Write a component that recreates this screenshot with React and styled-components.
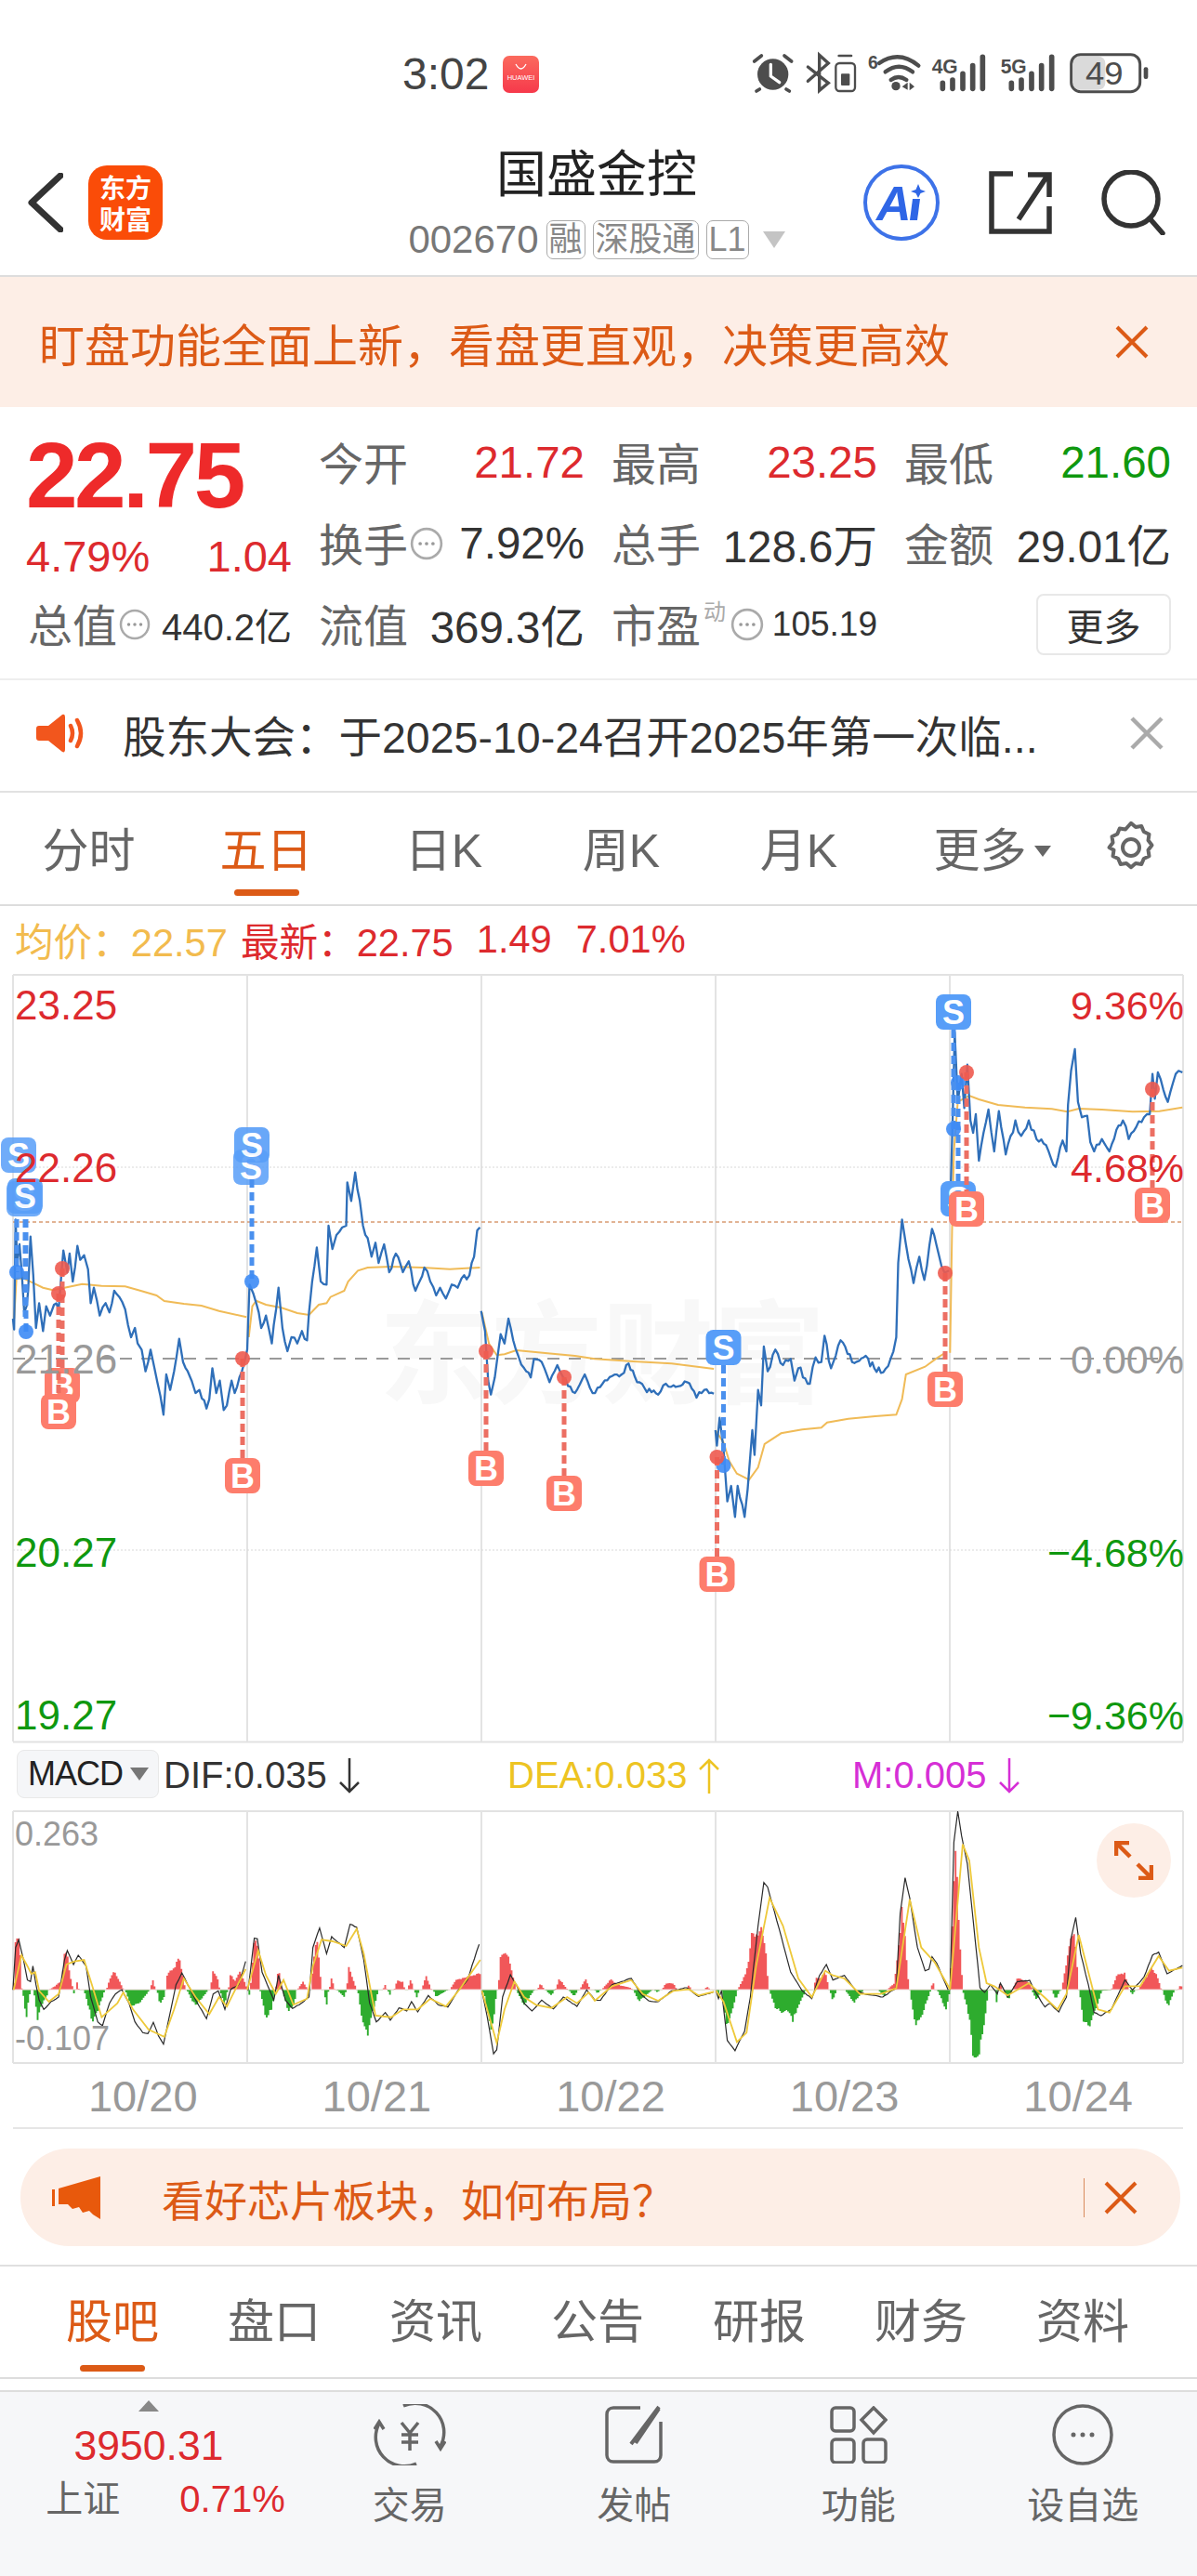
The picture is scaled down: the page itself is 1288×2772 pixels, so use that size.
import React from 'react';
import styled, {createGlobalStyle} from 'styled-components';

const SANS = '"Liberation Sans","Noto Sans CJK SC",sans-serif';
const RED = '#dd2a2e';
const GREEN = '#0f980f';
const ORANGE = '#dc5a16';
const PEACH = '#fdeee6';

const GlobalStyle = createGlobalStyle`
    html,body{margin:0;padding:0;background:#fff;}
    body{font-family:${SANS};}
    *{box-sizing:border-box;}
`;

// ---- chart data, traced from crops: "x,y x,y ..." in crop coordinates, converted to page px ----
const parse = (s, fx, fy) => s.trim().split(/\s+/).map(p => {
    const [x, y] = p.split(',').map(Number);
    return [fx(x), fy(y)];
});
const xa = x => x / 2.376;
const xb = x => 640 + x * 0.4133;
const yTop = y => 1040 + y / 3;
const yLow = y => 1480 + y / 3;
const yMacd = y => 1950 + y / 3;

let seed = 7;
const rnd = () => {
    seed = (seed * 16807) % 2147483647;
    return seed / 2147483647;
};

// subdivide each segment and add a little noise so it looks like tick data
const jag = (pts, amp) => {
    let out = [pts[0]];
    for (let i = 1; i < pts.length; i++) {
        const [x0, y0] = pts[i - 1];
        const [x1, y1] = pts[i];
        const n = Math.max(1, Math.floor((x1 - x0) / 2.2));
        for (let k = 1; k < n; k++) {
            const t = k / n;
            out.push([x0 + (x1 - x0) * t, y0 + (y1 - y0) * t + (rnd() - 0.5) * amp]);
        }
        out.push([x1, y1]);
    }
    return out;
};
const toPath = pts => 'M' + pts.map(p => p[0].toFixed(1) + ' ' + p[1].toFixed(1)).join('L');

const blue = [
    jag(parse('33,1140 36,1175 40,820 44,960 50,900 56,1000 62,1120 68,1100 72,1050 78,875 85,1000 92,1170 100,1090 110,1180 118,1100 128,1130 138,1095 150,1110 158,980 162,920 172,990 178,930 186,1020 198,905 205,950 215,935 225,980 232,1090 240,1040 255,1130 270,1090 280,1120 292,1050 305,1070 320,1110 335,1200 345,1170 352,1220 362,1240 372,1310 385,1240 395,1300 410,1390 418,1450 425,1320 435,1370 445,1310 458,1205 468,1280 480,1310 490,1340 500,1380 510,1370 528,1430 535,1400 543,1300 553,1380 562,1340 572,1435 580,1420 592,1340 600,1380 612,1330 625,1280 632,1240 638,1030 648,1060 655,1090 668,1170 680,1130 695,1220 700,1160 712,1040 722,1170 735,1245 745,1200 760,1220 772,1180 785,1210 790,1120 798,1020 810,910 820,1020 835,1030 840,840 850,915 860,870 875,845 885,840 888,700 898,760 908,668 920,760 928,840 940,880 950,940 960,895 968,960 982,900 995,990 1012,930 1030,990 1045,955 1062,1050 1085,975 1100,1020 1115,1065 1125,1040 1140,1075 1155,1030 1170,1040 1180,1010 1200,1000 1212,940 1220,855 1227,845', xa, yTop), 8),
    jag([
        ...parse('1230,1115 1240,1180 1248,1340 1255,1385 1265,1330 1280,1190 1290,1220 1300,1140 1312,1210 1325,1260 1340,1300 1357,1330 1365,1270 1385,1280 1405,1345 1425,1290 1440,1330 1470,1380 1495,1320 1515,1380', xa, yTop),
        ...parse('20,1350 45,1325 70,1320 88,1285 110,1345 130,1365 165,1385 185,1350 205,1355 240,1345 265,1395 285,1370 310,1382', xb, yTop),
    ], 6),
    jag([
        ...parse('314,180 318,230 325,140 335,240 345,410 355,360 365,460 372,360 390,460 398,370 405,260 410,180 416,260 425,50', xb, yLow),
        ...parse('433,1420 440,1230 450,1310 470,1240 490,1290 510,1270 520,1340 530,1300 560,1350 575,1265 590,1280 598,1195 615,1300 640,1210 670,1280 700,1265 745,1315 770,1270 785,1200 790,960 800,820 810,900 830,1025 845,940 858,1015 878,850 895,930 910,990 922,985', xb, yTop),
    ], 8),
    jag(parse('925,800 932,480 937,215 945,440 955,350 962,460 970,320 978,500 985,540 992,480 1000,630 1012,540 1025,465 1040,600 1052,470 1070,610 1095,500 1110,550 1130,500 1150,560 1175,580 1200,650 1218,565 1228,600 1232,450 1240,340 1250,270 1258,440 1268,490 1282,485 1290,570 1300,600 1320,560 1340,600 1358,530 1375,500 1390,560 1410,520 1430,490 1445,480 1452,350 1458,430 1466,345 1480,400 1492,440 1505,380 1520,340 1530,345', xb, yTop), 8),
];

const avg = [
    parse('36,1140 42,1010 60,1010 85,1025 110,1040 135,1048 165,1040 210,1028 260,1034 320,1036 360,1050 400,1065 420,1083 470,1092 515,1098 560,1115 630,1135', xa, yTop),
    parse('636,1200 645,1100 655,1082 680,1095 720,1105 760,1122 790,1128 815,1095 835,1090 845,1070 880,1050 890,1020 915,985 940,975 1000,972 1080,975 1150,980 1227,975', xa, yTop),
    [...parse('1232,1120 1250,1220 1270,1258 1290,1255 1320,1242 1400,1252 1470,1260', xa, yTop), ...parse('0,1270 100,1278 200,1285 310,1302', xb, yTop)],
    [...parse('314,180 335,220 350,280 370,320 402,340 425,300 442,225 485,190 540,178 590,172 605,155 660,143 730,135 785,130 800,80', xb, yLow), ...parse('810,1320 860,1295 890,1268 915,1248', xb, yTop)],
    parse('925,1250 930,860 935,600 945,440 975,420 1000,432 1050,450 1120,458 1190,463 1230,472 1260,462 1320,465 1400,472 1470,470 1530,458', xb, yTop),
];

const marks = [
    {t: 'S', x: 20, y: 1244, o: .85},
    {t: 'S', x: 26, y: 1291, o: .85},
    {t: 'S', x: 27, y: 1288, o: .9, line: [1313, 1418]},
    {t: 'S', x: 18, y: 1290, o: 0, dot: 1370, line: [1313, 1370]},
    {t: 'S', x: 28, y: 1290, o: 0, dot: 1434, line: [1313, 1434]},
    {t: 'B', x: 67, y: 1492, dot: 1366, line: [1366, 1476]},
    {t: 'B', x: 63, y: 1520, dot: 1393, line: [1393, 1500]},
    {t: 'S', x: 270, y: 1257, o: .85},
    {t: 'S', x: 271, y: 1233, dot: 1380, line: [1270, 1380], o: .9},
    {t: 'B', x: 261, y: 1589, dot: 1463, line: [1463, 1570]},
    {t: 'B', x: 523, y: 1581, dot: 1455, line: [1455, 1562]},
    {t: 'B', x: 607, y: 1608, dot: 1483, line: [1483, 1590]},
    {t: 'S', x: 778.5, y: 1451, dot: 1578, line: [1470, 1578]},
    {t: 'B', x: 771.5, y: 1695, dot: 1569, line: [1569, 1676]},
    {t: 'B', x: 1017, y: 1496, dot: 1371, line: [1371, 1477]},
    {t: 'S', x: 1031, y: 1291, dot: 1166, line: [1166, 1272]},
    {t: 'S', x: 1026, y: 1090, dot: 1216, line: [1109, 1216]},
    {t: 'B', x: 1040, y: 1302, dot: 1155, line: [1155, 1283]},
    {t: 'B', x: 1240, y: 1298, dot: 1173, line: [1173, 1279]},
];

const histPts = [
    ...parse('33,577 35,577 40,408 50,410 56,577 58,577 62,625 68,670 72,620 78,577 85,577 90,610 96,690 105,630 120,600 124,577 126,577 140,565 158,545 165,445 172,460 182,550 188,577 190,600 193,577 196,545 202,577 215,577 228,640 236,695 250,650 268,577 272,577 280,545 292,512 305,545 316,577 320,577 335,630 350,625 365,610 382,577 385,577 390,540 398,577 402,577 408,625 420,600 422,577 424,577 428,520 445,505 458,460 468,530 474,577 478,577 490,610 500,630 515,610 532,577 538,577 545,510 555,530 562,577 575,630 582,577 584,577 590,520 600,550 615,510 628,560 634,577 636,605 640,577 650,410 660,420 665,577 675,640 680,675 695,640 703,577 705,577 712,505 722,577 738,655 755,610 758,577 760,577 775,550 788,577 795,577 805,430 812,400 822,577 828,577 835,630 840,577 842,577 848,535 856,577 862,577 880,600 886,577 892,500 905,550 912,577 915,577 925,680 940,735 955,640 968,577 980,577 983,555 990,577 992,577 996,600 1000,577 1008,577 1015,545 1030,550 1035,577 1042,577 1050,540 1058,577 1060,577 1065,605 1072,577 1078,577 1090,530 1103,577 1108,577 1115,600 1145,577 1150,577 1165,545 1185,535 1228,520 1231,577 1232,577 1240,600 1255,715 1262,680 1270,577 1274,577 1280,450 1300,460 1310,520 1320,577 1340,630 1366,577 1374,577 1382,555 1392,577 1395,577 1410,597 1418,577 1420,577 1430,540 1452,577 1455,577 1468,600 1478,577 1482,577 1497,540 1510,577', xa, yMacd),
    ...parse('0,577 8,590 15,577 18,577 42,540 60,560 95,570 98,577 100,577 115,615 130,600 150,577 155,577 163,585 170,577 175,577 185,555 205,555 214,577 238,577 245,560 252,577 285,577 292,565 302,577 318,577 320,620 326,577 330,577 345,710 355,660 372,577 385,545 398,500 410,370 420,400 435,360 445,430 452,577 455,577 470,640 490,655 505,650 515,685 530,630 550,577 570,577 575,535 590,535 600,510 610,577 612,577 620,615 630,577 652,577 675,620 700,577 738,577 755,600 760,577 780,555 790,450 800,290 808,400 818,577 820,577 835,705 850,670 875,577 876,577 880,535 884,577 892,577 915,645 925,577 935,200 940,60 948,340 958,577 975,670 985,805 998,805 1012,720 1025,577 1042,577 1046,625 1050,577 1056,550 1062,577 1065,577 1078,610 1085,577 1088,577 1100,535 1135,555 1138,577 1150,610 1165,577 1190,577 1200,610 1212,577 1215,577 1222,530 1240,400 1250,390 1260,577 1262,577 1272,695 1290,700 1320,580 1345,577 1360,525 1380,520 1392,577 1400,592 1408,577 1415,577 1430,545 1450,500 1465,530 1475,577 1478,577 1492,635 1510,577 1518,577 1525,560 1535,577', xb, yMacd),
];

const difLines = [
    parse('33,577 40,440 48,415 60,480 70,545 78,550 84,500 92,560 100,610 112,640 130,615 150,600 165,480 172,450 188,495 200,465 220,500 232,600 250,680 262,692 280,620 295,590 312,577 330,620 345,680 365,715 378,718 392,682 405,725 418,752 430,680 450,560 465,522 480,560 505,620 528,670 545,590 558,580 575,640 590,575 610,560 628,485', xa, yMacd),
    parse('634,580 650,410 658,412 670,520 690,580 700,610 712,530 730,610 748,637 770,620 790,600 800,440 817,377 835,460 848,405 880,440 895,365 912,375 930,480 945,620 962,680 985,650 998,675 1020,635 1040,645 1052,615 1068,648 1095,595 1120,625 1145,632 1170,580 1195,545 1225,430', xa, yMacd),
    [...parse('1232,580 1245,660 1262,783 1270,770 1285,600 1305,528 1320,560 1340,620 1360,645 1385,610 1415,638 1440,600 1475,630 1500,577', xa, yMacd), ...parse('0,610 15,610 45,560 70,550 95,540 120,590 140,612 165,615 200,580 240,570 270,598 310,583', xb, yMacd)],
    parse('316,580 322,605 330,580 345,740 365,773 390,710 405,600 425,370 440,230 450,245 480,380 510,520 540,580 565,605 585,530 603,495 620,545 650,530 680,580 710,592 750,600 785,570 795,330 808,215 820,280 840,440 860,515 870,510 878,470 890,490 920,577', xb, yMacd),
    parse('925,577 935,100 945,0 955,80 970,170 985,350 1003,570 1015,585 1030,560 1048,590 1056,555 1075,600 1100,550 1132,546 1150,590 1172,632 1185,620 1208,648 1228,600 1240,410 1252,343 1265,460 1285,560 1300,650 1318,660 1345,640 1380,545 1400,577 1430,535 1452,465 1468,455 1490,525 1530,498', xb, yMacd),
];

const deaLines = [
    parse('35,577 55,465 70,500 80,525 90,520 100,580 125,615 150,590 170,495 190,485 215,480 235,560 260,665 300,620 315,585 340,640 380,705 420,728 445,640 470,540 500,600 535,655 560,600 580,630 600,580 628,510', xa, yMacd),
    parse('632,577 660,450 680,530 705,590 725,545 750,625 785,605 800,500 822,415 850,420 885,435 912,380 930,460 960,660 1000,665 1030,640 1068,640 1100,605 1140,630 1175,575 1228,480', xa, yMacd),
    [...parse('1232,580 1270,748 1290,640 1315,550 1340,600 1370,625 1410,635 1450,600 1475,620 1505,585', xa, yMacd), ...parse('0,612 45,565 95,545 125,590 165,612 205,580 245,575 270,595 310,583', xb, yMacd)],
    parse('316,580 335,615 370,745 395,715 420,500 455,280 490,370 530,540 565,600 600,515 620,530 650,540 690,590 745,590 785,572 820,285 850,440 885,488 925,575', xb, yMacd),
    parse('925,575 958,107 975,160 1000,440 1020,555 1040,565 1075,595 1130,555 1170,600 1205,640 1228,590 1260,400 1285,520 1310,640 1340,650 1380,565 1420,565 1468,468 1495,515 1530,505', xb, yMacd),
];

const BASE = 2142;
const histogram = () => {
    let up = '';
    let down = '';
    let seg = 0;
    for (let x = 15; x < 1273; x += 1.7) {
        while (seg < histPts.length - 2 && histPts[seg + 1][0] < x) seg++;
        const [x0, y0] = histPts[seg];
        const [x1, y1] = histPts[seg + 1];
        const t = x1 > x0 ? Math.min(1, Math.max(0, (x - x0) / (x1 - x0))) : 0;
        const y = BASE + (y0 + (y1 - y0) * t - BASE) * (0.86 + rnd() * 0.14);
        const d = `M${x.toFixed(1)} ${BASE}V${y.toFixed(1)}`;
        if (y < BASE) up += d; else down += d;
    }
    return {up, down};
};
const hist = histogram();
const gridX = [14, 266, 518, 770, 1022, 1273];

// ---- layout ----
const Page = styled.div`
    width:1288px;
    height:2772px;
    display:flex;
    flex-direction:column;
    background:#fff;
    overflow:hidden;
`;
const StatusBar = styled.div`
    height:130px;
    flex:none;
    display:flex;
    align-items:center;
    padding:30px 28px 0 433px;
`;
const Clock = styled.span`
    font-size:48px;
    line-height:50px;
    color:#444;
    margin-right:15px;
`;
const StatusIcons = styled.svg`
    margin-left:auto;
    display:block;
`;
const Header = styled.div`
    height:168px;
    flex:none;
    display:grid;
    grid-template-columns:1fr auto 1fr;
    align-items:center;
    border-bottom:2px solid #ddd;
    padding:10px 34px 0 30px;
`;
const HeaderLeft = styled.div`
    display:flex;
    align-items:center;
    gap:27px;
`;
const Logo = styled.div`
    width:80px;
    height:80px;
    border-radius:20px;
    background:#fa4c08;
    color:#fff;
    font-size:28px;
    line-height:34px;
    font-weight:700;
    display:flex;
    align-items:center;
    justify-content:center;
    text-align:center;
    font-family:"Noto Sans CJK SC",sans-serif;
`;
const TitleBlock = styled.div`
    display:flex;
    flex-direction:column;
    align-items:center;
    margin-top:-2px;
`;
const Title = styled.div`
    font-size:54px;
    line-height:66px;
    color:#222;
`;
const SubRow = styled.div`
    display:flex;
    align-items:center;
    gap:8px;
    margin-top:15px;
`;
const Code = styled.span`
    font-size:42px;
    line-height:44px;
    color:#777;
`;
const Tag = styled.span`
    font-size:36px;
    line-height:40px;
    height:42px;
    padding:0 2px;
    border:1px solid #aaa;
    border-radius:7px;
    color:#888;
`;
const Caret = styled.span`
    width:0;
    height:0;
    margin-left:${p => p.$gap ?? 7}px;
    border-left:${p => p.$half || 12}px solid transparent;
    border-right:${p => p.$half || 12}px solid transparent;
    border-top:${p => p.$size || 18}px solid ${p => p.$color || '#c4c4c4'};
`;
const HeaderRight = styled.div`
    display:flex;
    align-items:center;
    justify-content:flex-end;
    gap:52px;
`;
const Banner = styled.div`
    height:140px;
    flex:none;
    background:${PEACH};
    display:flex;
    align-items:center;
    justify-content:space-between;
    padding:0 52px 0 42px;
    color:${ORANGE};
    font-size:49px;
`;
const Quote = styled.div`
    height:292px;
    flex:none;
    display:grid;
    grid-template-columns:284px 286px 286px 287px;
    grid-template-rows:87px 87px 87px;
    column-gap:29px;
    padding:16px 0 0 30px;
`;
const PriceCell = styled.div`
    grid-row:1 / span 2;
    padding-top:7px;
`;
const Price = styled.div`
    font-size:100px;
    line-height:100px;
    font-weight:700;
    letter-spacing:-3.500px;
    margin-left:-2px;
    color:#ee2a2a;
`;
const ChangeRow = styled.div`
    display:flex;
    justify-content:space-between;
    align-items:center;
    height:74px;
    font-size:47px;
    color:${RED};
    margin-left:-2px;
`;
const Stat = styled.div`
    display:flex;
    align-items:center;
`;
const Label = styled.span`
    font-size:48px;
    color:#666;
    margin-top:-4px;
`;
const Value = styled.span`
    margin-left:auto;
    font-size:${p => p.$size || 47.5}px;
    color:${p => p.$color || '#333'};
`;
const Super = styled.span`
    font-size:24px;
    color:#aaa;
    align-self:flex-start;
    margin:11px 3px 0 3px;
`;
const InfoWrap = styled.svg`
    flex:none;
    margin-left:2px;
`;
const MoreButton = styled.div`
    justify-self:end;
    align-self:center;
    width:145px;
    height:66px;
    border:2px solid #e8e8e8;
    border-radius:8px;
    font-size:40px;
    color:#333;
    display:flex;
    align-items:center;
    justify-content:center;
`;
const Notice = styled.div`
    height:123px;
    flex:none;
    display:flex;
    align-items:center;
    border-top:2px solid #eee;
    border-bottom:2px solid #e2e2e2;
    padding:0 36px 5px 39px;
    font-size:46.5px;
    color:#333;
`;
const NoticeText = styled.span`
    margin-left:39px;
    flex:1;
    white-space:nowrap;
`;
const KTabs = styled.div`
    height:122px;
    flex:none;
    display:grid;
    grid-template-columns:repeat(6,191px) 1fr;
    border-bottom:2px solid #ddd;
`;
const Tab = styled.div`
    display:flex;
    flex-direction:column;
    align-items:center;
    padding:${p => p.$top || 30}px 0 0 ${p => p.$left || 0}px;
`;
const TabLabel = styled.span`
    font-size:50px;
    line-height:60px;
    white-space:nowrap;
    color:${p => p.$active ? ORANGE : p.$color || '#666'};
    display:flex;
    align-items:center;
`;
const TabBar = styled.span`
    width:70px;
    height:7px;
    border-radius:4px;
    margin-top:${p => p.$gap}px;
    background:${p => p.$active ? ORANGE : 'transparent'};
`;
const GearCell = styled.div`
    display:flex;
    align-items:center;
    justify-content:center;
    padding-bottom:2px;
`;
const Legend = styled.div`
    height:73px;
    flex:none;
    display:flex;
    align-items:center;
    padding-left:16px;
    font-size:41.6px;
    padding-bottom:2px;
    white-space:nowrap;
`;
const LegendItem = styled.span`
    color:${p => p.$color};
    margin-left:${p => p.$gap || 0}px;
`;
const ChartBox = styled.div`
    position:relative;
    width:1288px;
    height:${p => p.$h}px;
    flex:none;
`;
const ChartSvg = styled.svg`
    position:relative;
    display:block;
`;
const Watermark = styled.div`
    position:absolute;
    left:408px;
    top:346px;
    font-size:120px;
    line-height:130px;
    font-weight:700;
    color:#f8f8f8;
    white-space:nowrap;
`;
const AxisLabel = styled.span`
    position:absolute;
    top:${p => p.$top}px;
    ${p => p.$right ? 'right:14px;' : 'left:16px;'}
    font-size:${p => p.$size || 44}px;
    line-height:50px;
    color:${p => p.$color};
`;
const MacdHead = styled.div`
    height:72px;
    flex:none;
    display:flex;
    align-items:center;
    padding:0 0 3px 18px;
    font-size:40px;
`;
const MacdSelect = styled.div`
    width:153px;
    height:52px;
    flex:none;
    display:flex;
    align-items:center;
    padding-left:11px;
    margin-top:-3px;
    background:#f5f6f8;
    border:1px solid #e9e9e9;
    border-radius:8px;
    font-size:36px;
    letter-spacing:-1px;
    color:#222;
`;
const Indicator = styled.div`
    width:${p => p.$w}px;
    flex:none;
    display:flex;
    align-items:center;
    gap:12px;
    margin-left:${p => p.$gap || 0}px;
    color:${p => p.$color};
`;
const ExpandButton = styled.div`
    position:absolute;
    left:1180px;
    top:14px;
    width:80px;
    height:80px;
    border-radius:50%;
    background:${PEACH};
    display:flex;
    align-items:center;
    justify-content:center;
`;
const Dates = styled.div`
    height:70px;
    flex:none;
    display:grid;
    grid-template-columns:repeat(5,251.6px);
    align-items:center;
    margin:0 15px 0 14px;
    padding-left:14px;
    border-bottom:2px solid #e6e6e6;
    font-size:47px;
    color:#999;
    text-align:center;
`;
const AdWrap = styled.div`
    height:148px;
    flex:none;
    padding:21px 18px 0 22px;
    border-bottom:2px solid #e0e0e0;
`;
const AdBar = styled.div`
    height:105px;
    border-radius:52px;
    background:${PEACH};
    display:flex;
    align-items:center;
    padding:0 46px 0 34px;
    color:${ORANGE};
    font-size:46px;
`;
const AdText = styled.span`
    margin-left:64px;
    flex:1;
`;
const AdDivider = styled.span`
    width:1px;
    height:42px;
    background:#d98a5c;
    margin-right:21px;
`;
const InfoTabs = styled.div`
    height:121px;
    flex:none;
    display:grid;
    grid-template-columns:repeat(7,174px);
    padding-left:34px;
    border-bottom:2px solid #ddd;
`;
const BottomBar = styled.div`
    margin-top:12px;
    flex:1;
    display:grid;
    grid-template-columns:320px repeat(4,241.5px);
    background:#f6f7f9;
    border-top:2px solid #ddd;
`;
const Ticker = styled.div`
    display:flex;
    flex-direction:column;
    align-items:center;
    padding-top:9px;
`;
const TickerUp = styled.span`
    width:0;
    height:0;
    border-left:11px solid transparent;
    border-right:11px solid transparent;
    border-bottom:12px solid #888;
`;
const TickerValue = styled.span`
    font-size:44.5px;
    line-height:50px;
    margin-top:12px;
    color:${RED};
`;
const TickerRow = styled.div`
    display:flex;
    align-items:center;
    gap:64px;
    margin:12px 0 0 36px;
    font-size:40px;
    line-height:40px;
    color:#666;
`;
const TickerChange = styled.span`
    color:${RED};
`;
const NavItem = styled.div`
    display:flex;
    flex-direction:column;
    align-items:center;
    padding-top:12px;
`;
const NavIconBox = styled.div`
    height:68px;
    display:flex;
    align-items:center;
    justify-content:center;
`;
const NavLabel = styled.span`
    margin-top:20px;
    font-size:40px;
    line-height:44px;
    color:#666;
`;

// ---- icons ----
const StatusGlyphs = () => (
    <StatusIcons width="480" height="80" viewBox="0 0 1440 240" fill="none">
        <g stroke="#4d4d4d" strokeLinecap="round">
            <circle cx="155" cy="120" r="50" fill="#4d4d4d" stroke="none"/>
            <path d="M95 78 118 60M215 78 192 60M112 168 102 174M198 168 208 174" strokeWidth="11"/>
            <path d="M148 88V126L176 146" stroke="#fff" strokeWidth="10"/>
            <path d="M268 96 334 148 305 172V58L334 84 268 142" strokeWidth="10"/>
            <rect x="358" y="84" width="62" height="90" rx="12" strokeWidth="7"/>
            <path d="M368 60H408" strokeWidth="8"/>
            <path d="M498 84Q562 40 625 92M518 112Q562 78 606 112M536 138Q560 120 586 138" strokeWidth="13"/>
        </g>
        <rect x="1124" y="62" width="104" height="108" rx="22" fill="#dadada"/>
        <rect x="1118" y="56" width="222" height="120" rx="30" stroke="#4d4d4d" strokeWidth="9"/>
        <g fill="#4d4d4d">
            <rect x="375" y="118" width="28" height="38" rx="3"/>
            <circle cx="552" cy="158" r="14"/>
            <path d="M572 160 590 146V170ZM596 146 612 160 596 172Z"/>
            <text x="462" y="102" fontFamily={SANS} fontSize="58" fontWeight="700">6</text>
            <text x="668" y="116" fontFamily={SANS} fontSize="66" fontWeight="700" textLength="84" lengthAdjust="spacingAndGlyphs">4G</text>
            <text x="890" y="116" fontFamily={SANS} fontSize="66" fontWeight="700" textLength="84" lengthAdjust="spacingAndGlyphs">5G</text>
            <text x="1164" y="152" fontFamily={SANS} fontSize="104" textLength="122" lengthAdjust="spacingAndGlyphs">49</text>
            <rect x="1352" y="97" width="14" height="38" rx="6"/>
        </g>
        <g stroke="#4d4d4d" strokeWidth="17" strokeLinecap="round">
            <path d="M703 148V166M735 138V166M768 118V166M800 92V166M832 64V166"/>
            <path d="M925 148V166M957 138V166M990 118V166M1022 92V166M1055 64V166"/>
        </g>
    </StatusIcons>
);

const HuaweiBadge = () => (
    <svg width="39" height="40" viewBox="0 0 39 40">
        <defs>
            <linearGradient id="hw" x1="0" y1="0" x2="0" y2="1">
                <stop offset="0" stopColor="#fb6a5e"/>
                <stop offset="1" stopColor="#f6394b"/>
            </linearGradient>
        </defs>
        <rect width="39" height="40" rx="7" fill="url(#hw)"/>
        <path d="M14 9Q19.500 19 25 9" stroke="#fff" strokeWidth="1.300" fill="none"/>
        <text x="19.500" y="26" textAnchor="middle" fontFamily={SANS} fontSize="7.500" fill="#fff">HUAWEI</text>
    </svg>
);

const Chevron = () => (
    <svg width="38" height="64" viewBox="0 0 38 64" fill="none">
        <path d="M35 3 4 32 35 61" stroke="#333" strokeWidth="7" strokeLinecap="round" strokeLinejoin="round"/>
    </svg>
);

const AiIcon = () => (
    <svg width="84" height="84" viewBox="0 0 84 84" fill="none">
        <circle cx="42" cy="42" r="39" stroke="#3d72e8" strokeWidth="4"/>
        <text x="15" y="61" fontFamily={SANS} fontSize="52" fontWeight="700" fontStyle="italic" fill="#2f66e6">A</text>
        <path d="M54 38H62L59 61H51Z" fill="#2f66e6"/>
        <path d="M60 22 62.500 28 68 30 62.500 32 60 37 57.500 32 52 30 57.500 28Z" fill="#2f66e6"/>
    </svg>
);

const ShareIcon = () => (
    <svg width="68" height="68" viewBox="0 0 68 68" fill="none" stroke="#333" strokeWidth="5.500">
        <path d="M26 3H3V65H65V38"/>
        <path d="M63 5 32 52M42 4H65V28"/>
    </svg>
);

const SearchIcon = () => (
    <svg width="70" height="70" viewBox="0 0 70 70" fill="none" stroke="#333" strokeWidth="5.500" strokeLinecap="round">
        <circle cx="33" cy="31" r="29"/>
        <path d="M53 52 67 68"/>
    </svg>
);

const CloseIcon = ({color, size = 36, width = 4}) => (
    <svg width={size} height={size} viewBox="0 0 36 36" fill="none" stroke={color} strokeWidth={width}>
        <path d="M2 2 34 34M34 2 2 34"/>
    </svg>
);

const InfoIcon = ({size = 36}) => (
    <InfoWrap width={size} height={size} viewBox="0 0 34 34" fill="none">
        <circle cx="17" cy="17" r="15" stroke="#aaa" strokeWidth="2.500"/>
        <path d="M10.500 17h.01M17 17h.01M23.500 17h.01" stroke="#999" strokeWidth="3.500" strokeLinecap="round"/>
    </InfoWrap>
);

const SpeakerIcon = () => (
    <svg width="54" height="42" viewBox="0 0 54 42" style={{flex: 'none'}}>
        <path d="M3 13H13L28 1C30 0 31 1 31 4V38C31 41 30 42 28 41L13 29H3C1 29 0 28 0 26V16C0 14 1 13 3 13Z" fill="#f2561d"/>
        <path d="M37 13Q41 21 37 29M44 7Q52 21 44 35" fill="none" stroke="#f2561d" strokeWidth="4.500" strokeLinecap="round"/>
    </svg>
);

const Gear = () => (
    <svg width="60" height="62" viewBox="0 0 24 24" fill="none" stroke="#666" strokeWidth="1.600" strokeLinejoin="round">
        <path d="M12 1.500l2 1.700 2.500-.4 1 2.400 2.300 1.100-.4 2.600 1.600 2.100-1.600 2.100.4 2.600-2.300 1.100-1 2.400-2.500-.4-2 1.700-2-1.700-2.500.4-1-2.400-2.300-1.100.4-2.600L2.600 12l1.600-2.100-.4-2.600 2.300-1.100 1-2.400 2.500.4z"/>
        <circle cx="12" cy="12" r="3.600"/>
    </svg>
);

const MacdArrow = ({color, up}) => (
    <svg width="24" height="38" viewBox="0 0 24 38" fill="none" stroke={color} strokeWidth="2.500" style={up ? {transform: 'scaleY(-1)'} : undefined}>
        <path d="M12 0V36M2 26 12 36 22 26"/>
    </svg>
);

const ExpandGlyph = () => (
    <svg width="42" height="42" viewBox="0 0 42 42" fill="none" stroke={ORANGE} strokeWidth="4.500">
        <path d="M2 16V2H16M2 2 17 17M40 26V40H26M40 40 25 25"/>
    </svg>
);

const Megaphone = () => (
    <svg width="54" height="46" viewBox="0 0 54 46" style={{flex: 'none'}}>
        <path d="M0 14H3V32H0Z" fill="#e8590c"/>
        <path d="M7 13 52 0V46L44 41 40 37 33 39 29 33 22 35 17 30H7Z" fill="#e8590c"/>
    </svg>
);

const TradeIcon = () => (
    <svg width="78" height="66" viewBox="0 0 78 66" fill="none" stroke="#666" strokeWidth="3.500">
        <path d="M32 2A31 31 0 0 1 72 45M46 64A31 31 0 0 1 6 21"/>
        <path d="M1 27 6 19 11 27M67 40 72 48 77 40"/>
        <path d="M30 20 39 31 48 20M39 31V50M30 33H48M30 41H48"/>
    </svg>
);

const PostIcon = () => (
    <svg width="62" height="64" viewBox="0 0 62 64" fill="none" stroke="#666" strokeWidth="3.500">
        <path d="M38 3H9C5 3 2 6 2 10V54C2 58 5 61 9 61H53C57 61 60 58 60 54V18"/>
        <path d="M58 2 28 42 M58 4 33 41" strokeWidth="4"/>
    </svg>
);

const ToolsIcon = () => (
    <svg width="62" height="62" viewBox="0 0 62 62" fill="none" stroke="#666" strokeWidth="3.500">
        <rect x="2" y="2" width="24" height="25" rx="4"/>
        <path d="M47 2 60 15 47 29 34 15Z"/>
        <rect x="2" y="36" width="24" height="25" rx="4"/>
        <rect x="36" y="36" width="24" height="25" rx="4"/>
    </svg>
);

const MoreCircle = () => (
    <svg width="66" height="66" viewBox="0 0 66 66" fill="none">
        <circle cx="33" cy="33" r="31" stroke="#666" strokeWidth="3.500"/>
        <path d="M23 33h.01M33 33h.01M43 33h.01" stroke="#666" strokeWidth="5" strokeLinecap="round"/>
    </svg>
);

const Marker = ({m}) => {
    const isBuy = m.t === 'B';
    const main = isBuy ? '#ec6f63' : '#4a90ee';
    const fill = isBuy ? '#fd7d6c' : '#589ef8';
    return (
        <g>
            {m.line && <path d={`M${m.x} ${m.line[0]}V${m.line[1]}`} stroke={main} strokeWidth="5" strokeDasharray="9 5"/>}
            {m.dot && <circle cx={m.x} cy={m.dot} r="8" fill={isBuy ? '#ee5a4f' : '#3d8bf5'} opacity=".9"/>}
            {m.o !== 0 && (
                <g opacity={m.o || 1}>
                    <rect x={m.x - 19} y={m.y - 19} width="38" height="38" rx="8" fill={fill}/>
                    <text x={m.x} y={m.y + 13} textAnchor="middle" fontFamily={SANS} fontSize="36" fontWeight="700" fill="#fff">{m.t}</text>
                </g>
            )}
        </g>
    );
};

const PriceChart = () => (
    <ChartBox $h={828}>
        <Watermark>东方财富</Watermark>
        <ChartSvg width="1288" height="828" viewBox="0 1049 1288 828" fill="none">
            <path d="M14 1050H1273M14 1875.500H1273" stroke="#e2e2e2" strokeWidth="2"/>
            {gridX.map(x => <path key={x} d={`M${x} 1050V1875`} stroke="#e3e3e3" strokeWidth="2"/>)}
            <path d="M14 1257H1273M14 1669H1273" stroke="#d8d8d8" strokeWidth="1" strokeDasharray="2 2"/>
            <path d="M14 1463H1273" stroke="#9a9a9a" strokeWidth="2" strokeDasharray="13 10"/>
            <path d="M14 1316H1273" stroke="#d99a72" strokeWidth="1.500" strokeDasharray="4 3"/>
            {avg.map((d, i) => <path key={i} d={toPath(d)} stroke="#f0bb57" strokeWidth="2"/>)}
            {blue.map((d, i) => <path key={i} d={toPath(d)} stroke="#2f6fb9" strokeWidth="2.300" strokeLinejoin="round"/>)}
            {marks.map((m, i) => <Marker key={i} m={m}/>)}
        </ChartSvg>
        <AxisLabel $top={9} $color={RED}>23.25</AxisLabel>
        <AxisLabel $top={184} $color={RED}>22.26</AxisLabel>
        <AxisLabel $top={390} $color="#999">21.26</AxisLabel>
        <AxisLabel $top={598} $color={GREEN}>20.27</AxisLabel>
        <AxisLabel $top={773} $color={GREEN}>19.27</AxisLabel>
        <AxisLabel $right $size={43} $top={9} $color={RED}>9.36%</AxisLabel>
        <AxisLabel $right $size={43} $top={184} $color={RED}>4.68%</AxisLabel>
        <AxisLabel $right $size={43} $top={390} $color="#999">0.00%</AxisLabel>
        <AxisLabel $right $size={43} $top={598} $color={GREEN}>−4.68%</AxisLabel>
        <AxisLabel $right $size={43} $top={773} $color={GREEN}>−9.36%</AxisLabel>
    </ChartBox>
);

const MacdChart = () => (
    <ChartBox $h={273}>
        <ChartSvg width="1288" height="273" viewBox="0 1949 1288 273" fill="none">
            <path d="M14 1950H1273M14 2221H1273" stroke="#e2e2e2" strokeWidth="2"/>
            {gridX.map(x => <path key={x} d={`M${x} 1950V2221`} stroke="#e3e3e3" strokeWidth="2"/>)}
            <path d={hist.up} stroke="#ee3a3c" strokeWidth="1.900" opacity=".85"/>
            <path d={hist.down} stroke="#17a317" strokeWidth="1.900" opacity=".9"/>
            <path d={`M14 ${BASE}H1273`} stroke="#f2dcdc" strokeWidth="1"/>
            {difLines.map((d, i) => <path key={i} d={toPath(jag(d, 1))} stroke="#2a2a2a" strokeWidth="1.200"/>)}
            {deaLines.map((d, i) => <path key={i} d={toPath(d)} stroke="#eec93a" strokeWidth="1.800"/>)}
        </ChartSvg>
        <AxisLabel $size={36} $top={1} $color="#999">0.263</AxisLabel>
        <AxisLabel $size={36} $top={221} $color="#999">-0.107</AxisLabel>
        <ExpandButton><ExpandGlyph/></ExpandButton>
    </ChartBox>
);

const kTabs = ['分时', '五日', '日K', '周K', '月K'];
const infoTabs = ['股吧', '盘口', '资讯', '公告', '研报', '财务', '资料'];

export default function App() {
    return (
        <Page>
            <GlobalStyle/>
            <StatusBar>
                <Clock>3:02</Clock>
                <HuaweiBadge/>
                <StatusGlyphs/>
            </StatusBar>
            <Header>
                <HeaderLeft>
                    <Chevron/>
                    <Logo>东方<br/>财富</Logo>
                </HeaderLeft>
                <TitleBlock>
                    <Title>国盛金控</Title>
                    <SubRow>
                        <Code>002670</Code>
                        <Tag>融</Tag>
                        <Tag>深股通</Tag>
                        <Tag>L1</Tag>
                        <Caret/>
                    </SubRow>
                </TitleBlock>
                <HeaderRight>
                    <AiIcon/>
                    <ShareIcon/>
                    <SearchIcon/>
                </HeaderRight>
            </Header>
            <Banner>
                <span>盯盘功能全面上新，看盘更直观，决策更高效</span>
                <CloseIcon color={ORANGE}/>
            </Banner>
            <Quote>
                <PriceCell>
                    <Price>22.75</Price>
                    <ChangeRow>
                        <span>4.79%</span>
                        <span>1.04</span>
                    </ChangeRow>
                </PriceCell>
                <Stat><Label>今开</Label><Value $color={RED}>21.72</Value></Stat>
                <Stat><Label>最高</Label><Value $color={RED}>23.25</Value></Stat>
                <Stat><Label>最低</Label><Value $color={GREEN}>21.60</Value></Stat>
                <Stat><Label>换手</Label><InfoIcon/><Value>7.92%</Value></Stat>
                <Stat><Label>总手</Label><Value>128.6万</Value></Stat>
                <Stat><Label>金额</Label><Value>29.01亿</Value></Stat>
                <Stat><Label>总值</Label><InfoIcon size={34}/><Value $size={40}>440.2亿</Value></Stat>
                <Stat><Label>流值</Label><Value>369.3亿</Value></Stat>
                <Stat><Label>市盈</Label><Super>动</Super><InfoIcon/><Value $size={37}>105.19</Value></Stat>
                <MoreButton>更多</MoreButton>
            </Quote>
            <Notice>
                <SpeakerIcon/>
                <NoticeText>股东大会：于2025-10-24召开2025年第一次临...</NoticeText>
                <CloseIcon color="#aaa" width={4.5}/>
            </Notice>
            <KTabs>
                {kTabs.map((t, i) => (
                    <Tab key={t} $top={33}>
                        <TabLabel $active={i === 1}>{t}</TabLabel>
                        <TabBar $gap={11} $active={i === 1}/>
                    </Tab>
                ))}
                <Tab $top={33} $left={34}>
                    <TabLabel>更多<Caret $half={9} $size={12} $gap={8} $color="#666"/></TabLabel>
                </Tab>
                <GearCell><Gear/></GearCell>
            </KTabs>
            <Legend>
                <LegendItem $color="#f2bb4e">均价：22.57</LegendItem>
                <LegendItem $color={RED} $gap={14}>最新：22.75</LegendItem>
                <LegendItem $color={RED} $gap={25}>1.49</LegendItem>
                <LegendItem $color={RED} $gap={26}>7.01%</LegendItem>
            </Legend>
            <PriceChart/>
            <MacdHead>
                <MacdSelect>MACD<Caret $half={10} $size={14} $gap={8} $color="#777"/></MacdSelect>
                <Indicator $w={370} $gap={5} $color="#333">DIF:0.035<MacdArrow color="#333"/></Indicator>
                <Indicator $w={371} $color="#edc422">DEA:0.033<MacdArrow up color="#edc422"/></Indicator>
                <Indicator $w={250} $color="#d62fd6">M:0.005<MacdArrow color="#d62fd6"/></Indicator>
            </MacdHead>
            <MacdChart/>
            <Dates>
                <span>10/20</span>
                <span>10/21</span>
                <span>10/22</span>
                <span>10/23</span>
                <span>10/24</span>
            </Dates>
            <AdWrap>
                <AdBar>
                    <Megaphone/>
                    <AdText>看好芯片板块，如何布局？</AdText>
                    <AdDivider/>
                    <CloseIcon color={ORANGE}/>
                </AdBar>
            </AdWrap>
            <InfoTabs>
                {infoTabs.map((t, i) => (
                    <Tab key={t}>
                        <TabLabel $active={i === 0}>{t}</TabLabel>
                        <TabBar $gap={16} $active={i === 0}/>
                    </Tab>
                ))}
            </InfoTabs>
            <BottomBar>
                <Ticker>
                    <TickerUp/>
                    <TickerValue>3950.31</TickerValue>
                    <TickerRow>
                        <span>上证</span>
                        <TickerChange>0.71%</TickerChange>
                    </TickerRow>
                </Ticker>
                <NavItem><NavIconBox><TradeIcon/></NavIconBox><NavLabel>交易</NavLabel></NavItem>
                <NavItem><NavIconBox><PostIcon/></NavIconBox><NavLabel>发帖</NavLabel></NavItem>
                <NavItem><NavIconBox><ToolsIcon/></NavIconBox><NavLabel>功能</NavLabel></NavItem>
                <NavItem><NavIconBox><MoreCircle/></NavIconBox><NavLabel>设自选</NavLabel></NavItem>
            </BottomBar>
        </Page>
    );
}
